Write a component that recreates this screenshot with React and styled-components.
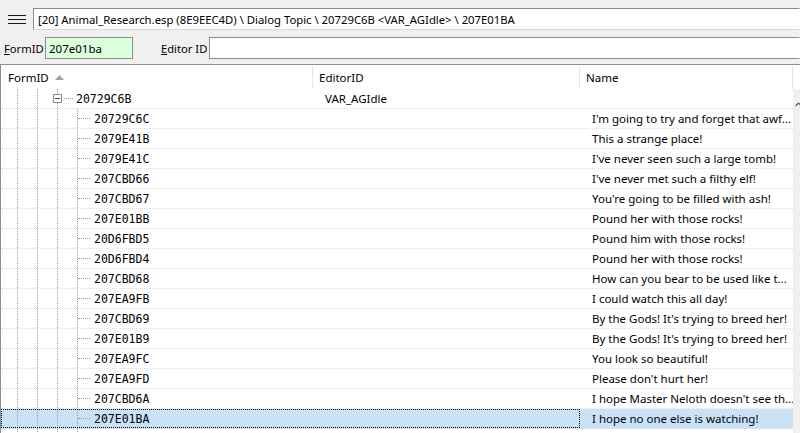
import React from 'react';
import styled, { createGlobalStyle } from 'styled-components';

const Global = createGlobalStyle`
  html, body { margin: 0; padding: 0; background: #f0f0f0; overflow: hidden; }
  body { font-family: "Noto Sans", "Liberation Sans", sans-serif; font-size: 11px; color: #000; }
`;

const Window = styled.div`
  width: 800px;
  height: 433px;
  display: flex;
  flex-direction: column;
  overflow: hidden;
  background: #f0f0f0;
`;

const TopBar = styled.div`
  display: flex;
  align-items: center;
  padding: 8px 0 0 8px;
  height: 22px;
  flex-shrink: 0;
`;

const MenuButton = styled.div`
  width: 18px;
  height: 22px;
  margin-right: 7px;
  display: flex;
  align-items: center;
`;

const PathBox = styled.div`
  flex: 1;
  height: 22px;
  box-sizing: border-box;
  border: 1px solid;
  border-color: #8c8c8c transparent #dadada #8c8c8c;
  background: #fff;
  padding-left: 4px;
  display: flex;
  align-items: center;
  white-space: nowrap;
  overflow: hidden;
  font-size: 11.3px;
`;

const FilterBar = styled.div`
  display: flex;
  align-items: center;
  height: 22px;
  margin-top: 7px;
  padding-left: 4px;
  flex-shrink: 0;
`;

const FieldLabel = styled.label`
  width: ${p => p.$w}px;
  margin-left: ${p => p.$ml || 0}px;
  font-size: 11.2px;
  white-space: nowrap;
  u { text-decoration: underline; }
`;

const Field = styled.div`
  ${p => (p.$w ? `width: ${p.$w}px;` : 'flex: 1;')}
  height: 22px;
  box-sizing: border-box;
  border: 1px solid #8c8c8c;
  ${p => (p.$w ? '' : 'border-right-color: transparent;')}
  background: ${p => p.$bg};
  padding-left: 3px;
  display: flex;
  align-items: center;
  font-size: 11.5px;
`;

const Tree = styled.div`
  margin-top: 5px;
  flex: 1;
  min-height: 0;
  display: flex;
  flex-direction: column;
  border-top: 1px solid #8c8f96;
  border-left: 1px solid #8c8f96;
  background: #fff;
  overflow: hidden;
`;

const Header = styled.div`
  display: flex;
  height: 24px;
  flex-shrink: 0;
`;

const HeaderCell = styled.div`
  width: ${p => p.$w}px;
  box-sizing: border-box;
  padding-left: ${p => p.$pl}px;
  display: flex;
  align-items: center;
  font-size: 11.5px;
  position: relative;
  &::after {
    content: "";
    position: absolute;
    right: 0;
    top: 1px;
    bottom: 0;
    width: 1px;
    background: #e5e5e5;
  }
`;

const SortArrow = styled.svg`
  margin-left: 6px;
  display: block;
`;

const Body = styled.div`
  display: flex;
  flex: 1;
  min-height: 0;
`;

const RowList = styled.div`
  width: 792px;
  flex-shrink: 0;
  overflow: hidden;
`;

const ScrollTrack = styled.div`
  flex: 1;
  background: #f0f0f0;
  padding-top: 6px;
  padding-left: 2px;
  overflow: hidden;
`;

const Row = styled.div`
  display: flex;
  height: 20px;
  box-sizing: border-box;
  border-bottom: 1px dotted #dedede;
  background: ${p => (p.$selected ? '#c9e2f7' : 'transparent')};
`;

const MainCells = styled.div`
  display: flex;
  width: 579px;
  flex-shrink: 0;
  outline: ${p => (p.$focus ? '1px dotted #000' : 'none')};
  outline-offset: -1px;
`;

const TreeCell = styled.div`
  width: 312px;
  flex-shrink: 0;
  display: flex;
  align-items: stretch;
  padding-left: 16px;
  box-sizing: border-box;
`;

const Guide = styled.span`
  width: ${p => p.$w}px;
  flex-shrink: 0;
  border-left: 1px dotted #a0a0a0;
  box-sizing: border-box;
`;

const Expander = styled.span`
  width: 9px;
  flex-shrink: 0;
  display: flex;
  flex-direction: column;
`;

const ExpLine = styled.span`
  flex: 1;
  margin-left: 4px;
  border-left: 1px dotted #a0a0a0;
`;

const ExpBox = styled.span`
  width: 9px;
  height: 9px;
  box-sizing: border-box;
  border: 1px solid #919191;
  background: #fff;
  display: flex;
  align-items: center;
  justify-content: center;
  &::before {
    content: "";
    width: 5px;
    height: 1px;
    background: #2b4d8c;
  }
`;

const Connector = styled.span`
  flex-shrink: 0;
  display: flex;
  align-items: center;
  border-left: ${p => (p.$line ? '1px dotted #a0a0a0' : 'none')};
  margin-left: ${p => p.$ml || 0}px;
`;

const Stub = styled.span`
  width: ${p => p.$w}px;
  height: 0;
  border-top: 1px dotted #a0a0a0;
`;

const Id = styled.span`
  font-family: "DejaVu Sans Mono", "Liberation Mono", monospace;
  font-size: 11.5px;
  display: flex;
  align-items: center;
  margin-left: ${p => p.$ml}px;
  white-space: nowrap;
`;

const TextCell = styled.div`
  ${p => (p.$w ? `width: ${p.$w}px; flex-shrink: 0;` : 'flex: 1; min-width: 0;')}
  box-sizing: border-box;
  padding-left: 12px;
  display: flex;
  align-items: center;
  white-space: nowrap;
  overflow: hidden;
  font-size: 11.5px;
`;

const children = [
  ['20729C6C', "I'm going to try and forget that awf..."],
  ['2079E41B', 'This a strange place!'],
  ['2079E41C', "I've never seen such a large tomb!"],
  ['207CBD66', "I've never met such a filthy elf!"],
  ['207CBD67', "You're going to be filled with ash!"],
  ['207E01BB', 'Pound her with those rocks!'],
  ['20D6FBD5', 'Pound him with those rocks!'],
  ['20D6FBD4', 'Pound her with those rocks!'],
  ['207CBD68', 'How can you bear to be used like t...'],
  ['207EA9FB', 'I could watch this all day!'],
  ['207CBD69', "By the Gods! It's trying to breed her!"],
  ['207E01B9', "By the Gods! It's trying to breed her!"],
  ['207EA9FC', 'You look so beautiful!'],
  ['207EA9FD', "Please don't hurt her!"],
  ['207CBD6A', "I hope Master Neloth doesn't see th..."],
  ['207E01BA', 'I hope no one else is watching!'],
];

const SELECTED = '207E01BA';

function ParentRow() {
  return (
    <Row>
      <MainCells>
        <TreeCell>
          <Guide $w={20} />
          <Guide $w={16} />
          <Expander>
            <ExpLine />
            <ExpBox />
            <ExpLine />
          </Expander>
          <Connector $ml={2}>
            <Stub $w={9} />
          </Connector>
          <Id $ml={3}>20729C6B</Id>
        </TreeCell>
        <TextCell $w={267}>VAR_AGIdle</TextCell>
      </MainCells>
      <TextCell />
    </Row>
  );
}

function ChildRow({ id, name }) {
  const selected = id === SELECTED;
  return (
    <Row $selected={selected}>
      <MainCells $focus={selected}>
        <TreeCell>
          <Guide $w={20} />
          <Guide $w={20} />
          <Guide $w={20} />
          <Connector $line>
            <Stub $w={12} />
          </Connector>
          {id && <Id $ml={4}>{id}</Id>}
        </TreeCell>
        <TextCell $w={267} />
      </MainCells>
      <TextCell>{name}</TextCell>
    </Row>
  );
}

export default function App() {
  return (
    <Window>
      <Global />
      <TopBar>
        <MenuButton>
          <svg width="18" height="9" viewBox="0 0 18 9">
            <path d="M0 0.5H18M0 4.5H18M0 8.5H18" stroke="#1a1a1a" strokeWidth="1" />
          </svg>
        </MenuButton>
        <PathBox>[20] Animal_Research.esp (8E9EEC4D) \ Dialog Topic \ 20729C6B &lt;VAR_AGIdle&gt; \ 207E01BA</PathBox>
      </TopBar>
      <FilterBar>
        <FieldLabel $w={41}><u>F</u>ormID</FieldLabel>
        <Field $w={88} $bg="#dcffdc">207e01ba</Field>
        <FieldLabel $w={48} $ml={28}><u>E</u>ditor ID</FieldLabel>
        <Field $bg="#fff" />
      </FilterBar>
      <Tree>
        <Header>
          <HeaderCell $w={312} $pl={7}>
            FormID
            <SortArrow width="9" height="5" viewBox="0 0 9 5">
              <path d="M0 5L4.5 0L9 5Z" fill="#a3a3a3" />
            </SortArrow>
          </HeaderCell>
          <HeaderCell $w={267} $pl={6}>EditorID</HeaderCell>
          <HeaderCell $w={213} $pl={6}>Name</HeaderCell>
        </Header>
        <Body>
          <RowList>
            <ParentRow />
            {children.map(([id, name]) => (
              <ChildRow key={id} id={id} name={name} />
            ))}
            <ChildRow id="" name="" />
          </RowList>
          <ScrollTrack>
            <svg width="7" height="5" viewBox="0 0 7 5">
              <path d="M0.5 4L3.5 1L6.5 4" stroke="#606060" strokeWidth="1.2" fill="none" />
            </svg>
          </ScrollTrack>
        </Body>
      </Tree>
    </Window>
  );
}
